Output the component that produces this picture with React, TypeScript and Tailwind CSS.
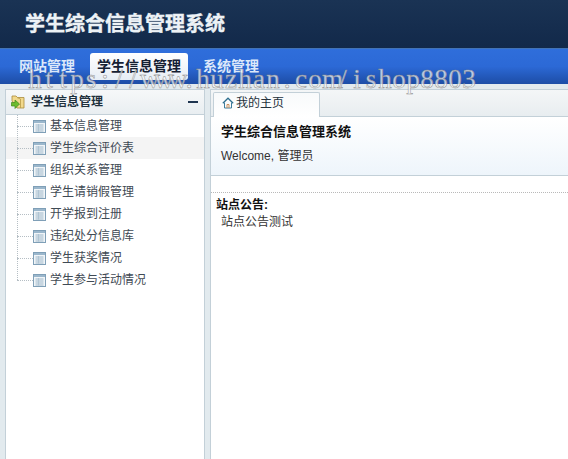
const sans = "font-['Liberation_Sans','Noto_Sans_CJK_SC',sans-serif]"

const menuItems = [
  "基本信息管理",
  "学生综合评价表",
  "组织关系管理",
  "学生请销假管理",
  "开学报到注册",
  "违纪处分信息库",
  "学生获奖情况",
  "学生参与活动情况",
]

const watermark = "https://www.huzhan.com/ishop8803".split("")

function TableIcon() {
  return (
    <svg width="13" height="13" viewBox="0 0 13 13" className="shrink-0">
      <rect x="0.5" y="0.5" width="12" height="12" fill="#f1f5f8" stroke="#7f9fb7" />
      <rect x="1" y="1" width="11" height="2" fill="#9bb7cc" />
      <path d="M2.5 5h8M2.5 7h8M2.5 9h8M2.5 11h8" stroke="#8aa7bd" strokeWidth="0.8" />
      <path d="M5.5 4v7.5" stroke="#a9c0d1" strokeWidth="0.8" />
    </svg>
  )
}

function FolderIcon() {
  return (
    <svg width="14" height="14" viewBox="0 0 14 14" className="shrink-0">
      <path d="M1 1h4l1.500 1.500H13V13H6L1 6z" fill="#f2d98c" stroke="#a98b3c" strokeWidth="0.8" />
      <path d="M6 2.500 9.500 4v9" fill="none" stroke="#b89a48" strokeWidth="0.8" />
      <path d="M0.500 7.500h3.500V5l4.500 4-4.500 4.500V11H0.500z" fill="#6cbb2e" stroke="#3f8a18" strokeWidth="0.7" />
    </svg>
  )
}

function HomeIcon() {
  return (
    <svg width="12" height="12" viewBox="0 0 12 12" className="shrink-0" fill="none">
      <path d="M0.800 6.200 6 1.200l5.200 5" stroke="#2f6f8f" strokeWidth="1.2" />
      <path d="M2.500 5.500v5.500h7V5.500" stroke="#3d7c9c" />
      <path d="M5 11V7.500h2V11" stroke="#c98f5a" />
    </svg>
  )
}

export default function App() {
  return (
    <div className={`relative flex h-[459px] w-[568px] flex-col overflow-hidden bg-[#e2eaee] ${sans}`}>
      <header className="flex h-[48px] shrink-0 items-center bg-gradient-to-b from-[#1a3354] to-[#12294a] pl-[25px]">
        <h1 className="text-[20px] font-bold text-[#edf2f6] [-webkit-text-stroke:0.4px_#edf2f6]">学生综合信息管理系统</h1>
      </header>

      <nav className="flex h-[36px] shrink-0 items-start gap-[6px] border-t border-[#4273b5] bg-gradient-to-b from-[#2f6edb] via-[#2c69d6] to-[#1d4da6] pl-[10px] pt-[4px] text-[14px] font-bold text-[#dce8fa]">
        <span className="px-[9px] py-[4px] leading-[19px]">网站管理</span>
        <span className="rounded-[3px] bg-gradient-to-b from-white to-[#e6edf5] px-[7px] py-[4px] leading-[19px] text-[#152033]">学生信息管理</span>
        <span className="px-[9px] py-[4px] leading-[19px]">系统管理</span>
      </nav>

      <main className="flex min-h-0 flex-1 gap-[5px] pl-[5px] pt-[5px]">
        <aside className="flex w-[200px] shrink-0 flex-col border border-b-0 border-[#c3d0d8] bg-white">
          <div className="flex h-[25px] shrink-0 items-center justify-between border-b border-[#c3d0d8] bg-gradient-to-b from-[#f6f8f9] to-[#e9eef1] pl-[5px] pr-[6px] text-[12px] font-bold text-[#20303c]">
            <div className="flex items-center gap-[6px]">
              <FolderIcon />
              <span>学生信息管理</span>
            </div>
            <span className="h-[2px] w-[10px] bg-[#1f3550]" />
          </div>
          <ul className="relative text-[12px] text-[#3f4a54]">
            <span className="absolute bottom-[11px] left-[11px] top-0 border-l border-dotted border-[#b5bec4]" />
            {menuItems.map((item, i) => (
              <li key={item} className={`flex h-[22px] items-center pl-[11px] ${i === 1 ? "bg-[#f4f4f4]" : ""}`}>
                <span className="w-[16px] shrink-0 border-t border-dotted border-[#b5bec4]" />
                <TableIcon />
                <span className="ml-[4px]">{item}</span>
              </li>
            ))}
          </ul>
        </aside>

        <section className="flex min-w-0 flex-1 flex-col border-l border-t border-[#c3d0d8] bg-white">
          <div className="flex h-[27px] shrink-0 items-end border-b border-[#c3d0d8] bg-gradient-to-b from-[#f4f6f7] to-[#e8edf0] pl-[2px]">
            <div className="-mb-px flex h-[25px] w-[107px] items-center gap-[2px] rounded-t-[2px] border border-b-0 border-[#c3d0d8] bg-gradient-to-b from-[#f8fafb] to-white pb-[4px] pl-[8px] text-[12px] text-[#25323c]">
              <HomeIcon />
              <span>我的主页</span>
            </div>
          </div>
          <div className="h-[59px] shrink-0 border-b border-[#c3d0d8] bg-gradient-to-b from-white to-[#eef5fb] pl-[10px] pt-[5px]">
            <h2 className="text-[13px] font-bold leading-[20px] text-[#111]">学生综合信息管理系统</h2>
            <p className="mt-[5px] text-[12px] leading-[18px] text-[#333]">Welcome, 管理员</p>
          </div>
          <div className="mt-[16px] border-t border-dotted border-[#b9b9b9] pl-[5px] pt-[4px] text-[12px] text-[#333]">
            <p className="font-bold leading-[17px] text-[#111]">站点公告:</p>
            <p className="pl-[5px] leading-[17px]">站点公告测试</p>
          </div>
        </section>
      </main>

      {/* watermark laid over the page, fixed 14px per character */}
      <div className="pointer-events-none absolute left-[28px] top-[64px] flex font-['Liberation_Serif',serif] text-[27px] leading-[30px] text-white/70 [-webkit-text-stroke:0.5px_#8f8f8f]">
        {watermark.map((ch, i) => (
          <span key={i} className="w-[14px] shrink-0 text-center">
            {ch}
          </span>
        ))}
      </div>
    </div>
  )
}
